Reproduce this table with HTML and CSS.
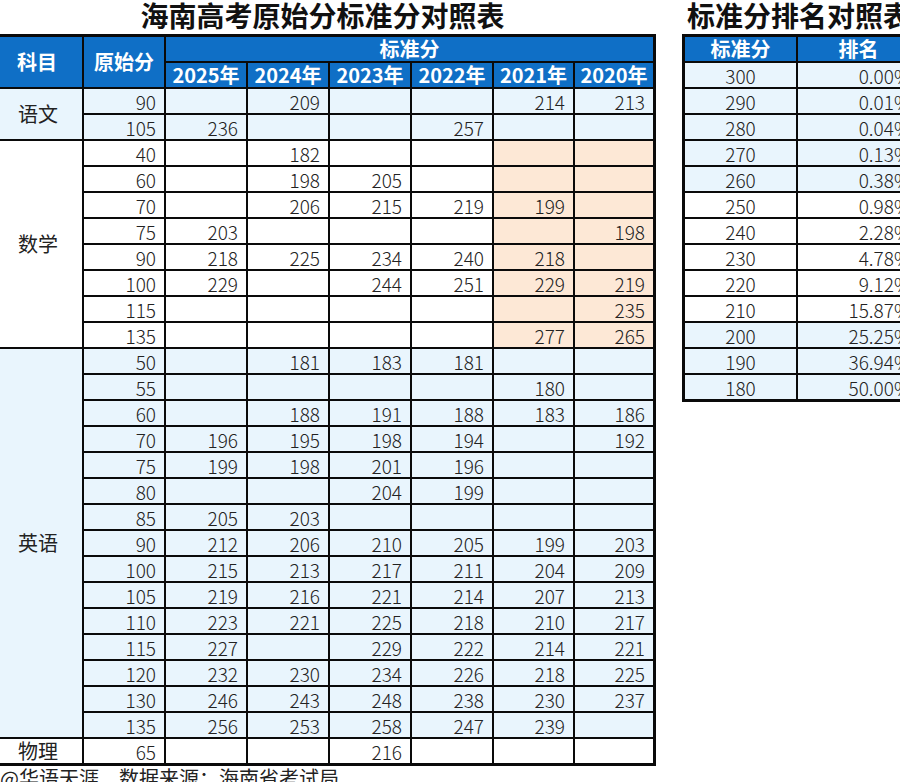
FILE: index.html
```html
<!DOCTYPE html>
<html lang="zh-CN">
<head>
<meta charset="utf-8">
<title>海南高考原始分标准分对照表</title>
<link rel="stylesheet" href="styles.css">
</head>
<body>
<div class="page">
  <section class="block block-main">
    <h1 class="title title-main">海南高考原始分标准分对照表</h1>
    <div class="grid grid-main">
      <div class="cell head head-subj span-r2">科目</div>
      <div class="cell head span-r2">原始分</div>
      <div class="cell head span-c6">标准分</div>
      <div class="cell head">2025年</div>
      <div class="cell head">2024年</div>
      <div class="cell head">2023年</div>
      <div class="cell head">2022年</div>
      <div class="cell head">2021年</div>
      <div class="cell head">2020年</div>

      <div class="cell subj blue span-r2">语文</div>
      <div class="cell num blue">90</div><div class="cell num blue"></div><div class="cell num blue">209</div><div class="cell num blue"></div><div class="cell num blue"></div><div class="cell num blue">214</div><div class="cell num blue">213</div>
      <div class="cell num blue">105</div><div class="cell num blue">236</div><div class="cell num blue"></div><div class="cell num blue"></div><div class="cell num blue">257</div><div class="cell num blue"></div><div class="cell num blue"></div>

      <div class="cell subj span-r8">数学</div>
      <div class="cell num">40</div><div class="cell num"></div><div class="cell num">182</div><div class="cell num"></div><div class="cell num"></div><div class="cell num peach"></div><div class="cell num peach"></div>
      <div class="cell num">60</div><div class="cell num"></div><div class="cell num">198</div><div class="cell num">205</div><div class="cell num"></div><div class="cell num peach"></div><div class="cell num peach"></div>
      <div class="cell num">70</div><div class="cell num"></div><div class="cell num">206</div><div class="cell num">215</div><div class="cell num">219</div><div class="cell num peach">199</div><div class="cell num peach"></div>
      <div class="cell num">75</div><div class="cell num">203</div><div class="cell num"></div><div class="cell num"></div><div class="cell num"></div><div class="cell num peach"></div><div class="cell num peach">198</div>
      <div class="cell num">90</div><div class="cell num">218</div><div class="cell num">225</div><div class="cell num">234</div><div class="cell num">240</div><div class="cell num peach">218</div><div class="cell num peach"></div>
      <div class="cell num">100</div><div class="cell num">229</div><div class="cell num"></div><div class="cell num">244</div><div class="cell num">251</div><div class="cell num peach">229</div><div class="cell num peach">219</div>
      <div class="cell num">115</div><div class="cell num"></div><div class="cell num"></div><div class="cell num"></div><div class="cell num"></div><div class="cell num peach"></div><div class="cell num peach">235</div>
      <div class="cell num">135</div><div class="cell num"></div><div class="cell num"></div><div class="cell num"></div><div class="cell num"></div><div class="cell num peach">277</div><div class="cell num peach">265</div>

      <div class="cell subj blue span-r15">英语</div>
      <div class="cell num blue">50</div><div class="cell num blue"></div><div class="cell num blue">181</div><div class="cell num blue">183</div><div class="cell num blue">181</div><div class="cell num blue"></div><div class="cell num blue"></div>
      <div class="cell num blue">55</div><div class="cell num blue"></div><div class="cell num blue"></div><div class="cell num blue"></div><div class="cell num blue"></div><div class="cell num blue">180</div><div class="cell num blue"></div>
      <div class="cell num blue">60</div><div class="cell num blue"></div><div class="cell num blue">188</div><div class="cell num blue">191</div><div class="cell num blue">188</div><div class="cell num blue">183</div><div class="cell num blue">186</div>
      <div class="cell num blue">70</div><div class="cell num blue">196</div><div class="cell num blue">195</div><div class="cell num blue">198</div><div class="cell num blue">194</div><div class="cell num blue"></div><div class="cell num blue">192</div>
      <div class="cell num blue">75</div><div class="cell num blue">199</div><div class="cell num blue">198</div><div class="cell num blue">201</div><div class="cell num blue">196</div><div class="cell num blue"></div><div class="cell num blue"></div>
      <div class="cell num blue">80</div><div class="cell num blue"></div><div class="cell num blue"></div><div class="cell num blue">204</div><div class="cell num blue">199</div><div class="cell num blue"></div><div class="cell num blue"></div>
      <div class="cell num blue">85</div><div class="cell num blue">205</div><div class="cell num blue">203</div><div class="cell num blue"></div><div class="cell num blue"></div><div class="cell num blue"></div><div class="cell num blue"></div>
      <div class="cell num blue">90</div><div class="cell num blue">212</div><div class="cell num blue">206</div><div class="cell num blue">210</div><div class="cell num blue">205</div><div class="cell num blue">199</div><div class="cell num blue">203</div>
      <div class="cell num blue">100</div><div class="cell num blue">215</div><div class="cell num blue">213</div><div class="cell num blue">217</div><div class="cell num blue">211</div><div class="cell num blue">204</div><div class="cell num blue">209</div>
      <div class="cell num blue">105</div><div class="cell num blue">219</div><div class="cell num blue">216</div><div class="cell num blue">221</div><div class="cell num blue">214</div><div class="cell num blue">207</div><div class="cell num blue">213</div>
      <div class="cell num blue">110</div><div class="cell num blue">223</div><div class="cell num blue">221</div><div class="cell num blue">225</div><div class="cell num blue">218</div><div class="cell num blue">210</div><div class="cell num blue">217</div>
      <div class="cell num blue">115</div><div class="cell num blue">227</div><div class="cell num blue"></div><div class="cell num blue">229</div><div class="cell num blue">222</div><div class="cell num blue">214</div><div class="cell num blue">221</div>
      <div class="cell num blue">120</div><div class="cell num blue">232</div><div class="cell num blue">230</div><div class="cell num blue">234</div><div class="cell num blue">226</div><div class="cell num blue">218</div><div class="cell num blue">225</div>
      <div class="cell num blue">130</div><div class="cell num blue">246</div><div class="cell num blue">243</div><div class="cell num blue">248</div><div class="cell num blue">238</div><div class="cell num blue">230</div><div class="cell num blue">237</div>
      <div class="cell num blue">135</div><div class="cell num blue">256</div><div class="cell num blue">253</div><div class="cell num blue">258</div><div class="cell num blue">247</div><div class="cell num blue">239</div><div class="cell num blue"></div>

      <div class="cell subj">物理</div>
      <div class="cell num">65</div><div class="cell num"></div><div class="cell num"></div><div class="cell num">216</div><div class="cell num"></div><div class="cell num"></div><div class="cell num"></div>
    </div>
    <p class="footer">@华语天涯　数据来源：海南省考试局</p>
  </section>

  <section class="block block-rank">
    <h1 class="title title-rank">标准分排名对照表</h1>
    <div class="grid grid-rank">
      <div class="cell head">标准分</div>
      <div class="cell head">排名</div>
      <div class="cell mid blue">300</div><div class="cell num blue">0.00%</div>
      <div class="cell mid blue">290</div><div class="cell num blue">0.01%</div>
      <div class="cell mid blue">280</div><div class="cell num blue">0.04%</div>
      <div class="cell mid blue">270</div><div class="cell num blue">0.13%</div>
      <div class="cell mid blue">260</div><div class="cell num blue">0.38%</div>
      <div class="cell mid">250</div><div class="cell num">0.98%</div>
      <div class="cell mid">240</div><div class="cell num">2.28%</div>
      <div class="cell mid">230</div><div class="cell num">4.78%</div>
      <div class="cell mid">220</div><div class="cell num">9.12%</div>
      <div class="cell mid">210</div><div class="cell num">15.87%</div>
      <div class="cell mid blue">200</div><div class="cell num blue">25.25%</div>
      <div class="cell mid blue">190</div><div class="cell num blue">36.94%</div>
      <div class="cell mid blue">180</div><div class="cell num blue">50.00%</div>
    </div>
  </section>
</div>
</body>
</html>
```

FILE: styles.css
```css
html, body {
  margin: 0;
  padding: 0;
  overflow: hidden;
  background: #ffffff;
}

body {
  font-family: "Noto Sans CJK SC", "Noto Sans", sans-serif;
  color: #222222;
  width: 900px;
  height: 782px;
}

.page {
  display: flex;
  align-items: flex-start;
  gap: 26px;
  margin-left: -3px;
  width: 960px;
}

.block {
  display: flex;
  flex-direction: column;
  flex: none;
}

.block-main {
  width: 659px;
}

.block-rank {
  width: 240px;
}

.title {
  margin: 0;
  height: 34px;
  font-size: 28px;
  line-height: 30px;
  font-weight: 700;
  color: #111111;
  white-space: nowrap;
}

.title-main {
  text-align: center;
  padding-right: 8px;
}

.title-rank {
  padding-left: 5px;
}

.grid {
  display: grid;
  gap: 2px;
  padding: 3px;
  background: #0a0a0a;
}

.grid-main {
  grid-template-columns: 82px 80px 80px 80px 80px 80px 79px 78px;
  grid-auto-rows: 24px;
}

.grid-rank {
  grid-template-columns: 111px 121px;
  grid-auto-rows: 24px;
}

.cell {
  background: #ffffff;
  display: flex;
  align-items: center;
  justify-content: center;
  font-size: 18px;
  line-height: 22px;
  white-space: nowrap;
}

.head {
  background: #0f6fc6;
  color: #ffffff;
  font-weight: 700;
  font-size: 20px;
}

.head-subj {
  padding-right: 8px;
}

.num,
.mid {
  font-family: "Noto Sans CJK SC", "Noto Sans", sans-serif;
  font-weight: 300;
  font-size: 19px;
  padding-top: 2px;
  color: #222222;
}

.num {
  justify-content: flex-end;
  padding-right: 8px;
}

.subj {
  font-size: 20px;
  font-weight: 400;
  padding-right: 6px;
}

.blue {
  background: #e9f5fd;
}

.peach {
  background: #fde8d6;
}

.span-r2 { grid-row: span 2; }
.span-r8 { grid-row: span 8; }
.span-r15 { grid-row: span 15; }
.span-c6 { grid-column: span 6; }

.footer {
  margin: 1px 0 0 3px;
  font-size: 20px;
  line-height: 22px;
  color: #222222;
  white-space: nowrap;
}
```
